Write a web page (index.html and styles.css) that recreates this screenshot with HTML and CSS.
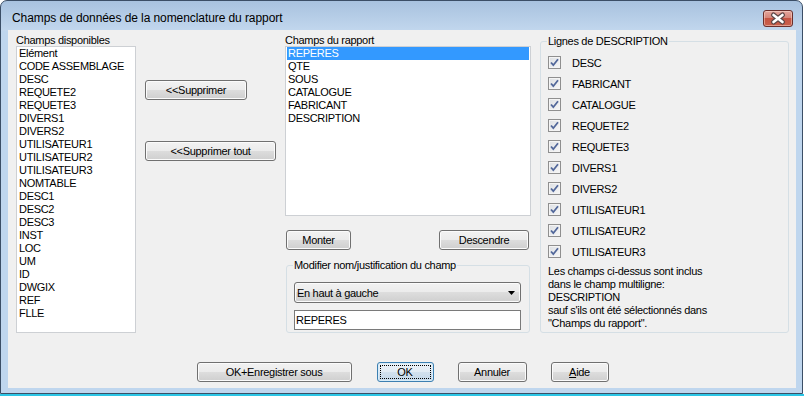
FILE: index.html
```html
<!DOCTYPE html>
<html lang="fr">
<head>
<meta charset="utf-8">
<title>Champs de données de la nomenclature du rapport</title>
<link rel="stylesheet" href="styles.css">
</head>
<body>
<div class="window">
  <div class="titlebar">
    <span class="title">Champs de données de la nomenclature du rapport</span>
    <button class="close" aria-label="Fermer"><svg width="30" height="17" viewBox="0 0 30 17"><path d="M10.5 5 L19.5 12 M19.5 5 L10.5 12" stroke="#5b4646" stroke-width="5" stroke-linecap="round"/><path d="M10.5 5 L19.5 12 M19.5 5 L10.5 12" stroke="#ffffff" stroke-width="2.6" stroke-linecap="round"/></svg></button>
  </div>
  <div class="client">
    <div class="main">
      <div class="col col-avail">
        <div class="label">Champs disponibles</div>
        <ul class="list list-avail">
          <li>Elément</li>
          <li>CODE ASSEMBLAGE</li>
          <li>DESC</li>
          <li>REQUETE2</li>
          <li>REQUETE3</li>
          <li>DIVERS1</li>
          <li>DIVERS2</li>
          <li>UTILISATEUR1</li>
          <li>UTILISATEUR2</li>
          <li>UTILISATEUR3</li>
          <li>NOMTABLE</li>
          <li>DESC1</li>
          <li>DESC2</li>
          <li>DESC3</li>
          <li>INST</li>
          <li>LOC</li>
          <li>UM</li>
          <li>ID</li>
          <li>DWGIX</li>
          <li>REF</li>
          <li>FLLE</li>
        </ul>
      </div>
      <div class="col col-actions">
        <button class="btn btn-remove">&lt;&lt;Supprimer</button>
        <button class="btn btn-remove-all">&lt;&lt;Supprimer tout</button>
      </div>
      <div class="col col-report">
        <div class="label">Champs du rapport</div>
        <ul class="list list-report">
          <li class="selected">REPERES</li>
          <li>QTE</li>
          <li>SOUS</li>
          <li>CATALOGUE</li>
          <li>FABRICANT</li>
          <li>DESCRIPTION</li>
        </ul>
        <div class="move-row">
          <button class="btn btn-up">Monter</button>
          <button class="btn btn-down">Descendre</button>
        </div>
        <fieldset class="group group-modify">
          <legend>Modifier nom/justification du champ</legend>
          <div class="combo"><span>En haut à gauche</span><svg class="arrow" width="7" height="4" viewBox="0 0 7 4"><path d="M0 0 H7 L3.5 4 Z" fill="#000"/></svg></div>
          <div class="textbox">REPERES</div>
        </fieldset>
      </div>
      <fieldset class="group group-desc">
        <legend>Lignes de DESCRIPTION</legend>
        <ul class="checks">
          <li><span class="cb"><svg width="13" height="13" viewBox="0 0 13 13"><path d="M3 6.5 L5.3 9.2 L10 3.2" fill="none" stroke="#51679a" stroke-width="1.8"/></svg></span><span class="cb-label">DESC</span></li>
          <li><span class="cb"><svg width="13" height="13" viewBox="0 0 13 13"><path d="M3 6.5 L5.3 9.2 L10 3.2" fill="none" stroke="#51679a" stroke-width="1.8"/></svg></span><span class="cb-label">FABRICANT</span></li>
          <li><span class="cb"><svg width="13" height="13" viewBox="0 0 13 13"><path d="M3 6.5 L5.3 9.2 L10 3.2" fill="none" stroke="#51679a" stroke-width="1.8"/></svg></span><span class="cb-label">CATALOGUE</span></li>
          <li><span class="cb"><svg width="13" height="13" viewBox="0 0 13 13"><path d="M3 6.5 L5.3 9.2 L10 3.2" fill="none" stroke="#51679a" stroke-width="1.8"/></svg></span><span class="cb-label">REQUETE2</span></li>
          <li><span class="cb"><svg width="13" height="13" viewBox="0 0 13 13"><path d="M3 6.5 L5.3 9.2 L10 3.2" fill="none" stroke="#51679a" stroke-width="1.8"/></svg></span><span class="cb-label">REQUETE3</span></li>
          <li><span class="cb"><svg width="13" height="13" viewBox="0 0 13 13"><path d="M3 6.5 L5.3 9.2 L10 3.2" fill="none" stroke="#51679a" stroke-width="1.8"/></svg></span><span class="cb-label">DIVERS1</span></li>
          <li><span class="cb"><svg width="13" height="13" viewBox="0 0 13 13"><path d="M3 6.5 L5.3 9.2 L10 3.2" fill="none" stroke="#51679a" stroke-width="1.8"/></svg></span><span class="cb-label">DIVERS2</span></li>
          <li><span class="cb"><svg width="13" height="13" viewBox="0 0 13 13"><path d="M3 6.5 L5.3 9.2 L10 3.2" fill="none" stroke="#51679a" stroke-width="1.8"/></svg></span><span class="cb-label">UTILISATEUR1</span></li>
          <li><span class="cb"><svg width="13" height="13" viewBox="0 0 13 13"><path d="M3 6.5 L5.3 9.2 L10 3.2" fill="none" stroke="#51679a" stroke-width="1.8"/></svg></span><span class="cb-label">UTILISATEUR2</span></li>
          <li><span class="cb"><svg width="13" height="13" viewBox="0 0 13 13"><path d="M3 6.5 L5.3 9.2 L10 3.2" fill="none" stroke="#51679a" stroke-width="1.8"/></svg></span><span class="cb-label">UTILISATEUR3</span></li>
        </ul>
        <p class="note">Les champs ci-dessus sont inclus<br>dans le champ multiligne:<br>DESCRIPTION<br>sauf s'ils ont été sélectionnés dans<br>"Champs du rapport".</p>
      </fieldset>
    </div>
    <div class="footer">
      <button class="btn btn-saveas">OK+Enregistrer sous</button>
      <button class="btn btn-ok">OK</button>
      <button class="btn btn-cancel">Annuler</button>
      <button class="btn btn-help"><u>A</u>ide</button>
    </div>
  </div>
</div>
<div class="taskline"></div>
</body>
</html>
```
FILE: styles.css
```css
* { box-sizing: border-box; }
html, body { margin: 0; padding: 0; }
body {
  width: 804px;
  height: 396px;
  overflow: hidden;
  background: #ffffff;
  font-family: "Liberation Sans", Arial, sans-serif;
  font-size: 11px;
  letter-spacing: -0.3px;
  color: #000;
}
.window {
  width: 803px;
  height: 394px;
  border: 1px solid #3b4e66;
  border-radius: 7px 7px 0 0;
  background: linear-gradient(#a8c2df 0, #c2d7ee 30px, #bfd6ee 30px, #bfd6ee 100%);
  padding: 0 6px 5px 7px;
  display: flex;
  flex-direction: column;
}
.titlebar {
  height: 29px;
  flex: none;
  display: flex;
  justify-content: space-between;
  align-items: flex-start;
  padding: 9px 3px 0 4px;
}
.title {
  font-family: "Liberation Sans", Arial, sans-serif;
  font-size: 12px;
  letter-spacing: -0.08px;
  line-height: 17px;
  color: #000;
}
.close {
  width: 30px;
  height: 17px;
  padding: 0;
  border: 1px solid #6a2f2c;
  border-radius: 3px;
  background: linear-gradient(#e4a69d 0%, #d6867a 45%, #c55443 50%, #c9604c 100%);
  box-shadow: inset 0 0 0 1px rgba(255, 230, 220, 0.45);
  display: flex;
  align-items: center;
  justify-content: center;
}
.close svg { display: block; margin: -1px; }
.client {
  height: 358px;
  flex: none;
  background: #f0f0f0;
  padding: 4px 7px 0 8px;
  display: flex;
  flex-direction: column;
}
.main {
  display: flex;
  height: 299px;
  flex: none;
}
.col { display: flex; flex-direction: column; }
.label { height: 12px; line-height: 12px; }
.list {
  list-style: none;
  margin: 0;
  padding: 0;
  background: #fff;
  border: 1px solid #cdd0d4;
}
.list li {
  height: 13px;
  line-height: 13px;
  padding-left: 2px;
  white-space: nowrap;
}
.col-avail { width: 120px; }
.list-avail { height: 287px; }
.list-avail li { padding-left: 2px; }
.col-actions {
  width: 131px;
  margin-left: 9px;
  padding-top: 46px;
  align-items: flex-start;
}
.btn {
  font-family: inherit;
  font-size: 11px;
  letter-spacing: -0.3px;
  color: #000;
  height: 20px;
  padding: 0;
  border: 1px solid #707070;
  border-radius: 3px;
  background: linear-gradient(#f2f2f2 0%, #ebebeb 50%, #dddddd 50%, #cfcfcf 100%);
  box-shadow: inset 0 0 0 1px #fbfbfb;
  flex: none;
}
.btn-remove { width: 102px; }
.btn-remove-all { width: 131px; margin-top: 41px; }
.col-report { width: 246px; margin-left: 9px; }
.list-report { height: 170px; padding: 0 1px; }
.list-report li { padding-left: 1px; }
.list-report li.selected { background: #3399ff; color: #fff; }
.move-row {
  display: flex;
  justify-content: space-between;
  margin: 14px 2px 0 1px;
}
.btn-up { width: 65px; }
.btn-down { width: 90px; }
.group {
  margin: 0;
  border: 1px solid #d5dfe5;
  border-radius: 3px;
  min-width: 0;
}
.group legend {
  padding: 0 1px;
  margin-left: -1px;
  line-height: 13px;
  height: 13px;
}
.group-modify {
  margin: 9px 1px 0 1px;
  padding: 0 8px 2px 7px;
}
.combo {
  margin-top: 10px;
  height: 21px;
  border: 1px solid #707070;
  border-radius: 3px;
  background: linear-gradient(#f2f2f2 0%, #ebebeb 50%, #dddddd 50%, #cfcfcf 100%);
  box-shadow: inset 0 0 0 1px #fbfbfb;
  display: flex;
  align-items: center;
  justify-content: space-between;
  padding: 0 5px 0 2px;
}
.combo .arrow { display: block; }
.textbox {
  margin-top: 7px;
  height: 20px;
  line-height: 18px;
  border: 1px solid #7a7a7a;
  background: #fff;
  padding-left: 1px;
}
.group-desc {
  width: 249px;
  height: 298px;
  margin: 1px 0 0 9px;
  padding: 0 7px 0 7px;
}
.checks {
  list-style: none;
  margin: 4px 0 0 0;
  padding: 0;
}
.checks li {
  height: 21px;
  display: flex;
  align-items: center;
}
.cb {
  width: 13px;
  height: 13px;
  border: 1px solid #8f8f8f;
  background: linear-gradient(135deg, #dcdfe3, #f7f7f7);
  box-shadow: inset 0 0 0 1px #f4f4f4;
  display: flex;
  align-items: center;
  justify-content: center;
}
.cb svg { display: block; margin: -1px; }
.cb-label { margin-left: 11px; }
.note {
  margin: 3px 0 0 0;
  line-height: 13px;
}
.footer {
  display: flex;
  justify-content: center;
  gap: 24px;
  padding-top: 29px;
}
.btn-saveas { width: 155px; margin-right: 1px; }
.btn-ok {
  width: 57px;
  border-color: #3c7fb1;
  background: linear-gradient(#eaf1f7 0%, #e1ebf4 50%, #d2e1ee 50%, #c5d8e9 100%);
  box-shadow: inset 0 0 0 1px #d8ecf8;
  outline: 1px dotted #000;
  outline-offset: -4px;
}
.btn-cancel { width: 69px; }
.btn-help { width: 58px; }
.taskline {
  height: 2px;
  background: #2cc6e6;
}
```
